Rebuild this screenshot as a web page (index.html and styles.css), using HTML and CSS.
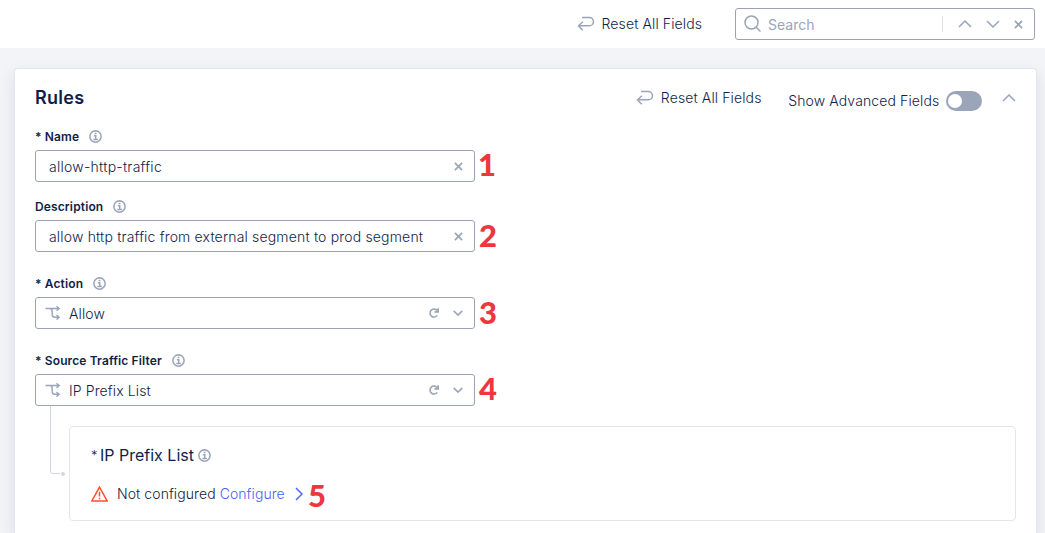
FILE: index.html
```html
<!DOCTYPE html>
<html lang="en">
<head>
<meta charset="utf-8">
<title>Rules</title>
<link rel="stylesheet" href="styles.css">
</head>
<body>
<svg class="sprite" aria-hidden="true">
  <symbol id="reset" viewBox="0 0 18 16"><path d="M5 1.500H12.300a3.800 3.800 0 0 1 0 8.300H1.500M5.800 5.800L1.500 10L5.800 14.200"/></symbol>
  <symbol id="up" viewBox="0 0 14 8"><path d="M1 7L7 1L13 7"/></symbol>
  <symbol id="down" viewBox="0 0 14 8"><path d="M1 1L7 7L13 1"/></symbol>
  <symbol id="close" viewBox="0 0 10 10"><path d="M1 1L9 9M9 1L1 9"/></symbol>
  <symbol id="info" viewBox="0 0 12 12"><circle cx="6" cy="6" r="5.200"/><path d="M4.500 5.200H6.200V8.600M4 8.700H8.200M5.200 3.200H6.900"/></symbol>
  <symbol id="branch" viewBox="0 0 16 14"><path d="M.5 2.500H14M11.500 .300L14.200 2.500L11.500 4.700M5.500 2.500C7 3 7.200 4 7.200 6V8.500C7.200 10.500 8 11.300 10 11.300H14M11.500 9L14.200 11.300L11.500 13.600"/></symbol>
  <symbol id="reload" viewBox="0 0 10 10"><path d="M8.300 7.400A4 4 0 1 1 8.200 2.600M5.500 3.900H9.200V.2"/></symbol>
</svg>
<header class="topbar">
  <button class="reset"><svg class="icon-reset"><use href="#reset"/></svg>Reset All Fields</button>
  <div class="search">
    <svg class="icon-search" viewBox="0 0 18 18"><circle cx="7.500" cy="7.500" r="6.500"/><path d="M12.200 12.200L16.500 16.500"/></svg>
    <span class="search-text">Search</span>
    <svg class="icon-arrow"><use href="#up"/></svg>
    <svg class="icon-arrow arrow-next"><use href="#down"/></svg>
    <svg class="icon-close"><use href="#close"/></svg>
  </div>
</header>
<main class="card">
  <div class="card-head">
    <h1 class="title">Rules</h1>
    <button class="reset card-reset"><svg class="icon-reset"><use href="#reset"/></svg>Reset All Fields</button>
    <span class="advanced">Show Advanced Fields</span>
    <span class="toggle"><i class="knob"></i></span>
    <svg class="icon-arrow collapse"><use href="#up"/></svg>
  </div>
  <section class="field">
    <label class="label"><span>* Name</span><svg class="icon-info"><use href="#info"/></svg></label>
    <div class="input"><span class="value name-value">allow-http-traffic</span><svg class="icon-close"><use href="#close"/></svg><b class="mark">1</b></div>
  </section>
  <section class="field">
    <label class="label"><span>Description</span><svg class="icon-info"><use href="#info"/></svg></label>
    <div class="input"><span class="value desc-value">allow http traffic from external segment to prod segment</span><svg class="icon-close"><use href="#close"/></svg><b class="mark mark-2">2</b></div>
  </section>
  <section class="field field-select">
    <label class="label"><span>* Action</span><svg class="icon-info"><use href="#info"/></svg></label>
    <div class="input select"><svg class="icon-branch"><use href="#branch"/></svg><span class="value">Allow</span><svg class="icon-reload"><use href="#reload"/></svg><svg class="icon-caret"><use href="#down"/></svg><b class="mark mark-2">3</b></div>
  </section>
  <section class="field field-select">
    <label class="label"><span>* Source Traffic Filter</span><svg class="icon-info"><use href="#info"/></svg></label>
    <div class="input select"><svg class="icon-branch"><use href="#branch"/></svg><span class="value">IP Prefix List</span><svg class="icon-reload"><use href="#reload"/></svg><svg class="icon-caret"><use href="#down"/></svg><b class="mark mark-4">4</b></div>
  </section>
  <div class="nested">
    <svg class="connector" viewBox="0 0 19 72"><path d="M1.500 0V65Q1.500 67.500 4 67.500H11"/><circle cx="14" cy="68" r="2"/></svg>
    <section class="panel">
      <h2 class="panel-title"><span class="star">*</span>IP Prefix List<svg class="icon-info"><use href="#info"/></svg></h2>
      <div class="status">
        <svg class="icon-warn" viewBox="0 0 16 15"><path d="M8 1L15.200 14H.8ZM8 5.300V9.800M8 11V12.500"/></svg>
        <span class="status-text">Not configured</span>
        <a class="configure">Configure</a>
        <svg class="icon-next" viewBox="0 0 8 14"><path d="M1 1L7 7L1 13"/></svg>
        <b class="mark mark-5">5</b>
      </div>
    </section>
  </div>
</main>
</body>
</html>
```
FILE: styles.css
```css
* { box-sizing: border-box; }
body { margin: 0; height: 533px; background: #f3f4f7; color: #0f1e4a; font: 300 14px/20px Inter, "Liberation Sans", sans-serif; letter-spacing: .12px; }
svg { display: block; flex: none; fill: none; stroke: #9ba5b9; stroke-width: 1.5; }
.sprite { position: absolute; width: 0; height: 0; }
.icon-reset { width: 18px; height: 16px; }
.icon-arrow { width: 14px; height: 8px; }
.icon-close { width: 9px; height: 9px; stroke-width: 1.9; }
.icon-info { width: 13px; height: 13px; stroke-width: 1.4; }

.topbar { display: flex; align-items: flex-start; height: 48px; padding: 8px 10px 0 577px; background: #fff; }
.reset { display: flex; align-items: center; gap: 7px; height: 32px; padding: 0; border: 0; background: none; color: inherit; font: inherit; letter-spacing: inherit; white-space: nowrap; }
.topbar .reset { width: 158px; }
.search { display: flex; align-items: center; width: 300px; height: 32px; padding-left: 8px; border: 1px solid #98a3b9; border-radius: 3px; }
.icon-search { width: 18px; height: 18px; }
.search-text { width: 175px; height: 16px; margin-left: 6px; border-right: 1px solid #dfe1ec; color: #9ba5b9; font-weight: 400; line-height: 18px; letter-spacing: 0; }
.search .icon-arrow { margin-left: 15px; }
.search .arrow-next { margin-left: 14px; }
.search .icon-close { margin-left: 14px; }

.card { height: 465px; margin: 20px 8px 0 14px; padding: 0 20px; border: 1px solid #e3e5f2; border-bottom: 0; border-radius: 4px 4px 0 0; background: #fff; box-shadow: 0 6px 16px rgba(40, 50, 90, .11); }
.card-head { display: flex; align-items: center; height: 60px; padding-bottom: 2px; }
.title { width: 602px; margin: 0; font-size: 18px; font-weight: 600; line-height: 24px; letter-spacing: .3px; }
.card-reset { width: 151px; }
.card-reset, .topbar .reset { gap: 6.5px; }
.advanced { width: 159px; margin-top: 5px; padding-left: 1px; white-space: nowrap; }
.toggle { width: 36px; height: 20px; margin-top: 5px; padding: 3px 2px; border-radius: 10px; background: #9ba5b9; }
.knob { display: block; width: 14px; height: 14px; border-radius: 50%; background: #fff; }
.collapse { margin-left: 20px; }

.field { width: 440px; margin-bottom: 17px; }
.field-select { margin: 24px 0 0; }
.label { display: flex; align-items: center; gap: 10px; height: 21px; padding-bottom: 7px; font-size: 12px; font-weight: 600; line-height: 16px; letter-spacing: .13px; }
.label span { padding-top: 1px; }
.input { position: relative; display: flex; align-items: center; width: 440px; height: 32px; padding: 0 11px 0 13px; border: 1px solid #98a3b9; border-radius: 3px; }
.value { flex: 1; padding-top: 2px; white-space: nowrap; }
.name-value { letter-spacing: .26px; }
.desc-value { letter-spacing: .17px; }
.select { padding-left: 9px; }
.icon-branch { width: 16px; height: 14px; margin-right: 8px; stroke-width: 1.4; }
.icon-reload { width: 10px; height: 10px; margin-right: 14px; stroke-width: 1.6; }
.icon-caret { width: 10px; height: 6px; stroke-width: 2.2; }
.mark { position: absolute; left: 442px; top: -7px; color: #ef363e; font: 900 31px/40px Lato, sans-serif; letter-spacing: 0; }
.mark-2 { left: 443px; top: -6px; }
.mark-4 { left: 443px; top: -7px; }

.nested { display: flex; }
.connector { width: 19px; height: 72px; margin-left: 14px; stroke: #d0d5e2; stroke-width: 1; }
.connector circle { fill: #d0d5e2; stroke: none; }
.panel { width: 947px; height: 95px; margin: 20px 0 0 1px; padding: 17px 21px; border: 1px solid #e3e5f2; border-radius: 4px; }
.panel-title { display: flex; align-items: center; height: 22px; margin: 0; font-size: 16px; font-weight: 400; letter-spacing: 0; }
.star { font-size: 13px; width: 9px; font-weight: 300; }
.panel-title .icon-info { margin-left: 4px; }
.status { position: relative; display: flex; align-items: center; height: 20px; margin-top: 18px; white-space: nowrap; letter-spacing: .08px; }
.icon-warn { width: 17px; height: 16px; margin-right: 9px; stroke: #f7502d; stroke-width: 1.4; }
.configure { margin-left: 4px; color: #4a5ffa; }
.icon-next { width: 8px; height: 14px; margin-left: 10px; stroke: #5266f5; }
.mark-5 { left: 217px; top: -9px; }
```
